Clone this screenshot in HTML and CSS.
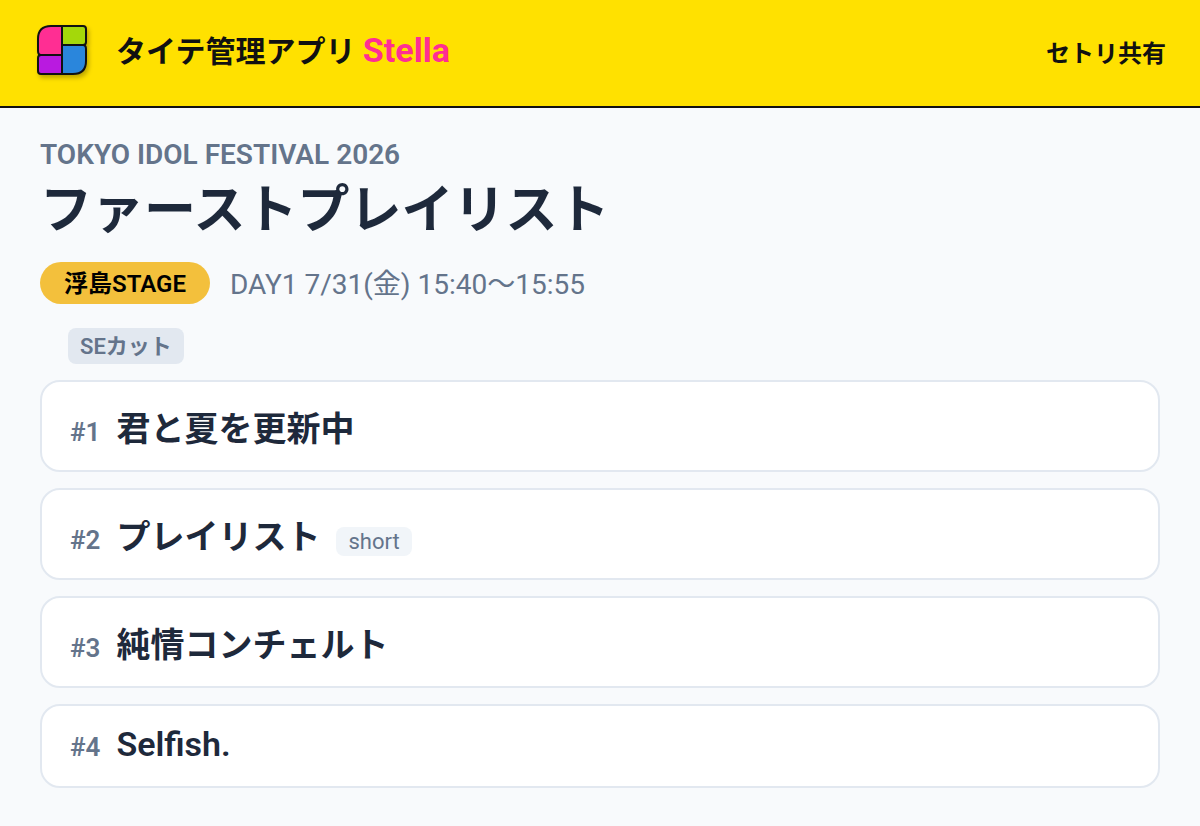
FILE: index.html
```html
<!DOCTYPE html>
<html lang="ja">
<head>
    <meta charset="UTF-8">
    <meta name="viewport" content="width=device-width, initial-scale=1.0">
    <title>タイテ管理アプリ Stella</title>
    <link rel="stylesheet" href="styles.css">
</head>
<body>
    <header class="header">
        <div class="brand">
            <svg class="logo" viewBox="0 0 50 50" aria-hidden="true">
                <g stroke="#111" stroke-width="2" stroke-linejoin="round">
                    <path d="M25 1H14Q1 1 1 14V26Q1 30 4 30H25Z" fill="#ff2e93"/>
                    <path d="M25 1H46Q49 1 49 4V17Q49 20 46 20H25Z" fill="#a4d80a"/>
                    <path d="M25 20H46Q49 20 49 24V36Q49 49 36 49H25Z" fill="#2a86dc"/>
                    <path d="M25 30H4Q1 30 1 33V46Q1 49 4 49H25Z" fill="#b91ae0"/>
                </g>
            </svg>
            <div class="brand-name">タイテ管理アプリ <span class="brand-accent">Stella</span></div>
        </div>
        <div class="header-label">セトリ共有</div>
    </header>

    <main class="content">
        <div class="event">TOKYO IDOL FESTIVAL 2026</div>
        <h1 class="artist">ファーストプレイリスト</h1>
        <div class="meta">
            <span class="stage">浮島STAGE</span>
            <span class="time">DAY1 7/31(金) 15:40〜15:55</span>
        </div>
        <div class="cut">SEカット</div>
        <ol class="songs">
            <li class="song">
                <span class="number">#1</span>
                <span class="name">君と夏を更新中</span>
            </li>
            <li class="song">
                <span class="number">#2</span>
                <span class="name">プレイリスト</span>
                <span class="note">short</span>
            </li>
            <li class="song">
                <span class="number">#3</span>
                <span class="name">純情コンチェルト</span>
            </li>
            <li class="song">
                <span class="number">#4</span>
                <span class="name" lang="en">Selfish.</span>
            </li>
        </ol>
    </main>
</body>
</html>
```
FILE: styles.css
```css
* {
    box-sizing: border-box;
}
body {
    margin: 0;
    background-color: #f8fafc;
    color: #1e293b;
    font-family: Roboto, "Noto Sans CJK JP", sans-serif;
}
.header {
    display: flex;
    align-items: center;
    justify-content: space-between;
    min-height: 108px;
    padding: 0 34px 6px 37px;
    background-color: #ffe100;
    border-bottom: 2px solid #111;
    color: #111;
}
.brand {
    display: flex;
    align-items: center;
    gap: 29px;
}
.logo {
    width: 50px;
    height: 50px;
    filter: drop-shadow(2px 3px 2px rgba(0,0,0,0.25));
}
.brand-name {
    padding-bottom: 2px;
    font-size: 30px;
    font-weight: bold;
}
.brand-accent {
    color: #ff2e93;
    font-size: 34px;
}
.header-label {
    padding-top: 2px;
    font-size: 24px;
    font-weight: bold;
}
.content {
    padding: 30px 40px 40px;
}
.event {
    color: #64748b;
    font-size: 28px;
    font-weight: 600;
    line-height: 34px;
}
.artist {
    margin: 6px 0 18px;
    font-size: 52px;
    font-weight: bold;
    line-height: 66px;
}
.meta {
    display: flex;
    align-items: center;
    gap: 20px;
}
.stage {
    padding: 5px 24px 3px;
    border-radius: 21px;
    background-color: #f3c03c;
    color: #000;
    font-size: 24px;
    font-weight: 600;
    line-height: 34px;
}
.time {
    padding-top: 4px;
    color: #64748b;
    font-size: 28px;
    line-height: 38px;
}
.cut {
    width: fit-content;
    margin: 24px 0 16px 28px;
    padding: 3px 12px 1px;
    border-radius: 8px;
    background-color: #e2e8f0;
    color: #64748b;
    font-size: 22px;
    font-weight: 600;
    line-height: 32px;
}
.songs {
    display: flex;
    flex-direction: column;
    gap: 16px;
    margin: 0;
    padding: 0;
    list-style: none;
}
.song {
    display: flex;
    align-items: baseline;
    gap: 16px;
    min-height: 84px;
    padding: 21px 28px 19px;
    border: 2px solid #e2e8f0;
    border-radius: 20px;
    background-color: #fff;
}
.number {
    color: #64748b;
    font-size: 26px;
    font-weight: 600;
    line-height: 30px;
}
.name {
    font-family: "Noto Sans CJK JP", sans-serif;
    font-size: 34px;
    font-weight: 600;
    line-height: 48px;
}
.name:lang(en) {
    font-family: Roboto, sans-serif;
    line-height: 34px;
}
.note {
    padding: 2px 12px;
    border-radius: 8px;
    background-color: #f1f5f9;
    color: #64748b;
    font-size: 22px;
}
```
